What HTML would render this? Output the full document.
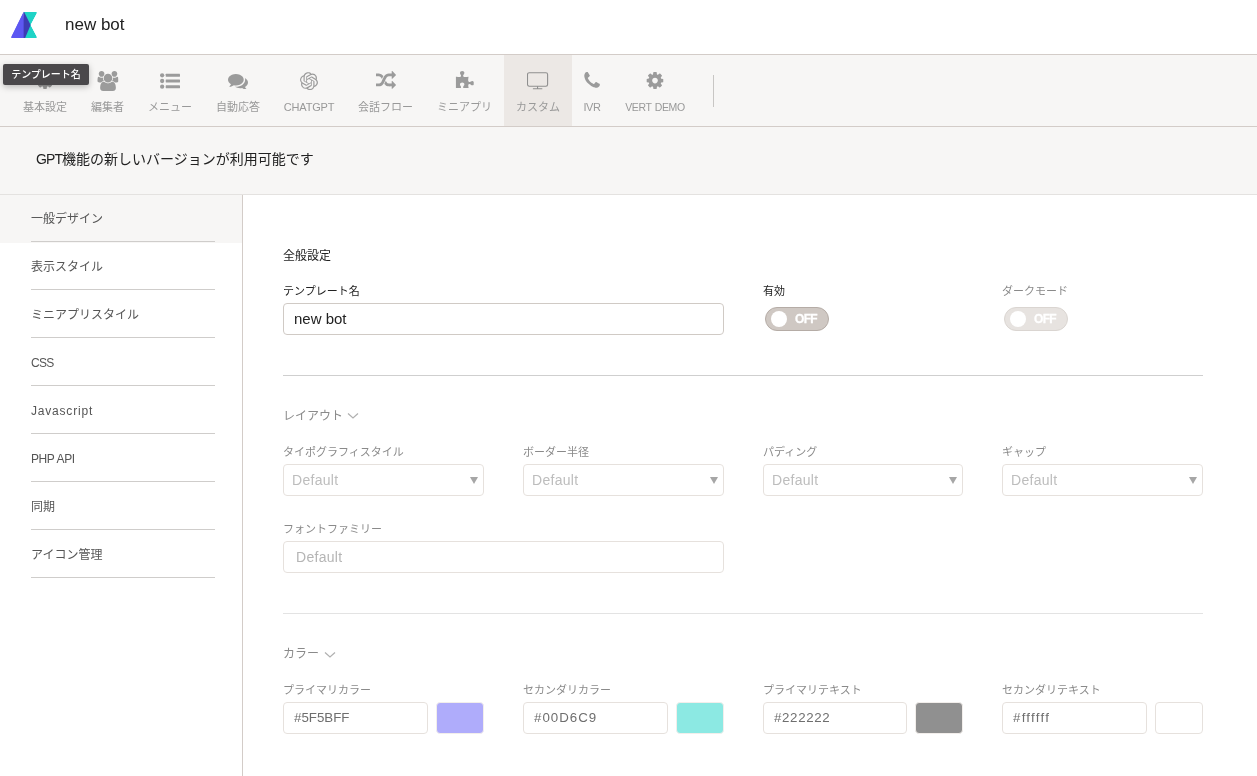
<!DOCTYPE html>
<html lang="ja">
<head>
<meta charset="utf-8">
<title>new bot</title>
<style>
*{box-sizing:border-box;margin:0;padding:0}
html,body{width:1257px;height:776px;overflow:hidden;background:#fff}
body{font-family:"Liberation Sans","Noto Sans CJK JP",sans-serif;color:#222;position:relative}
.abs{position:absolute}
#hdr,#nav,#tip,#notice,#side,#main{will-change:transform}
/* header */
#hdr{position:absolute;left:0;top:0;width:1257px;height:55px;background:#fff;border-bottom:1px solid #d3ccc8}
#logo{position:absolute;left:10px;top:11px;width:28px;height:28px}
#title{position:absolute;left:65px;top:13px;height:24px;line-height:24px;font-size:17px;color:#222;white-space:nowrap}
/* nav */
#nav{position:absolute;left:0;top:55px;width:1257px;height:72px;background:#f7f6f5;border-bottom:1px solid #d3ccc8}
.ni{position:absolute;top:0;height:71px;text-align:center;color:#999;font-size:11px;white-space:nowrap}
.ni svg{position:absolute;left:50%;transform:translateX(-50%)}
.ni span{position:absolute;left:0;right:0;top:44px;line-height:16px}
.ni.act{background:#ece8e5}
#vdiv{position:absolute;left:713px;top:20px;width:1px;height:32px;background:#c8c6c4}
#tip{position:absolute;left:3px;top:64px;width:86px;height:21px;background:#4a484b;border-radius:2px;color:#fff;font-size:10px;font-weight:500;line-height:21px;text-align:center;box-shadow:0 2px 6px rgba(0,0,0,.25);white-space:nowrap}
/* notice */
#notice{position:absolute;left:0;top:127px;width:1257px;height:68px;background:#f7f6f5;border-bottom:1px solid #e4e2e0}
#notice>span{position:absolute;left:36px;top:20px;line-height:24px;font-size:14px;color:#222;white-space:nowrap}
/* sidebar */
#side{position:absolute;left:0;top:195px;width:243px;height:581px;border-right:1px solid #d3ccc8;background:#fff}
.si{position:absolute;left:0;width:242px;height:48px;font-size:12px;color:#555;line-height:48px;padding-left:31px;white-space:nowrap}
.si.act{background:#f7f6f5;color:#555}
.si i{position:absolute;left:31px;bottom:1px;width:184px;height:1px;background:#cfcdcb}
/* main */
.lbl{position:absolute;font-size:11px;line-height:16px;color:#222;white-space:nowrap}
.lbl.g{color:#8a8a8a}
.sec{position:absolute;font-size:12px;line-height:18px;color:#222;white-space:nowrap}
.sec.g{color:#8a8a8a}
.inp{position:absolute;height:32px;border:1px solid #d0cac5;border-radius:4px;background:#fff;font-size:15px;line-height:30px;padding-left:10px;color:#222;white-space:nowrap}
.inp.l{border-color:#e6e1dd;color:#b5b5b5;font-size:14px;letter-spacing:.3px}
.inp.c{color:#6e6e6e;border-color:#e6e1dd;font-size:13.3px;padding-left:10px}
.sel{position:absolute;height:32px;width:201px;border:1px solid #e6e1dd;border-radius:4px;background:#fff;font-size:14px;letter-spacing:.3px;line-height:30px;padding-left:8px;color:#bdbdbd;white-space:nowrap}
.sel b{position:absolute;right:5.5px;top:12px;width:0;height:0;border-left:4.5px solid transparent;border-right:4.5px solid transparent;border-top:7.5px solid #a6a6a6}
.sw{position:absolute;width:48px;height:32px;border-radius:4px;border:1px solid #f2eeeb}
.hr{position:absolute;left:283px;width:920px;height:1px}
.tg{position:absolute;width:64px;height:24px;border-radius:12px;top:307px}
.tg u{position:absolute;left:5px;top:3px;width:16px;height:16px;border-radius:8px;background:#fff}
.tg s{position:absolute;left:29px;top:0;line-height:22px;font-size:12px;letter-spacing:-.7px;font-weight:bold;color:#fff;text-decoration:none;-webkit-text-stroke:.3px #fff}
</style>
</head>
<body>
<div id="hdr">
<svg id="logo" viewBox="0 0 28 28"><defs><clipPath id="lc"><path d="M12.86 1.90Q13.30 1.00 14.30 1.00L25.80 1.00Q27.40 1.00 26.67 2.42L20.60 14.00L26.67 25.58Q27.40 27.00 25.80 27.00L2.20 27.00Q0.40 27.00 1.19 25.38Z"/></clipPath></defs><g clip-path="url(#lc)"><path d="M13.7 0 L0 28 L14.6 28 Z" fill="#5d57f2"/><path d="M13.7 0 H28 L20.6 14 L28 28 H14.6 L14.6 14 Z" fill="#1fd3c6"/><path d="M13.6 0 L20.6 14 L14.7 28 H13.6 Z" fill="#3d3bb4"/></g></svg>
<div id="title">new bot</div>
</div>
<div id="nav">
<div class="ni" style="left:11px;width:68px"><svg style="top:17.23px" width="17.14" height="17.14" viewBox="128 128 1536 1536"><path fill="#9b9b9b" d="M1152 896q0-106-75-181t-181-75-181 75-75 181 75 181 181 75 181-75 75-181zm512-109v222q0 12-8 23t-20 13l-185 28q-19 54-39 91 35 50 107 138 10 12 10 25t-9 23q-27 37-99 108t-94 71q-12 0-26-9l-138-108q-44 23-91 38-16 136-29 186-7 28-36 28h-222q-14 0-24.500-8.500t-11.500-21.500l-28-184q-49-16-90-37l-141 107q-10 9-25 9-14 0-25-11-126-114-165-168-7-10-7-23 0-12 8-23 15-21 51-66.500t54-70.500q-27-50-41-99l-183-27q-13-2-21-12.500t-8-23.500v-222q0-12 8-23t19-13l186-28q14-46 39-92-40-57-107-138-10-12-10-24 0-10 9-23 26-36 98.500-107.500t94.500-71.500q13 0 26 10l138 107q44-23 91-38 16-136 29-186 7-28 36-28h222q14 0 24.500 8.500t11.500 21.500l28 184q49 16 90 37l142-107q9-9 24-9 13 0 25 10 129 119 165 170 7 8 7 22 0 12-8 23-15 21-51 66.500t-54 70.500q26 50 41 98l183 28q13 2 21 12.500t8 23.500z"/></svg><span>基本設定</span></div>
<div class="ni" style="left:79px;width:57px"><svg style="top:15.80px" width="21.43" height="20.00" viewBox="0 0 1920 1792"><path fill="#9b9b9b" d="M593 896q-162 5-265 128h-134q-82 0-138-40.500t-56-118.500q0-353 124-353 6 0 43.500 21t97.500 42.500 119 21.500q67 0 133-23-5 37-5 66 0 139 81 256zm1071 637q0 120-73 189.500t-194 69.500h-874q-121 0-194-69.500t-73-189.500q0-53 3.500-103.500t14-109 26.500-108.500 43-97.500 62-81 85.500-53.500 111.500-20q10 0 43 21.500t73 48 107 48 135 21.500 135-21.500 107-48 73-48 43-21.500q61 0 111.500 20t85.500 53.500 62 81 43 97.500 26.500 108.500 14 109 3.500 103.500zm-1024-1277q0 106-75 181t-181 75-181-75-75-181 75-181 181-75 181 75 75 181zm704 384q0 159-112.500 271.500t-271.500 112.500-271.500-112.500-112.500-271.500 112.500-271.500 271.500-112.500 271.500 112.500 112.500 271.500zm576 225q0 78-56 118.500t-138 40.500h-134q-103-123-265-128 81-117 81-256 0-29-5-66 66 23 133 23 59 0 119-21.500t97.500-42.500 43.500-21q124 0 124 353zm-128-609q0 106-75 181t-181 75-181-75-75-181 75-181 181-75 181 75 75 181z"/></svg><span>編集者</span></div>
<div class="ni" style="left:136px;width:68px"><svg style="top:15.8px" width="20" height="20" viewBox="0 0 1792 1792" fill="#9b9b9b"><circle cx="192" cy="384" r="192"/><circle cx="192" cy="896" r="192"/><circle cx="192" cy="1408" r="192"/><rect x="512" y="256" width="1280" height="256" rx="32"/><rect x="512" y="768" width="1280" height="256" rx="32"/><rect x="512" y="1280" width="1280" height="256" rx="32"/></svg><span>メニュー</span></div>
<div class="ni" style="left:204px;width:68px"><svg style="top:18.66px" width="20.00" height="15.72" viewBox="0 256 1792 1408"><path fill="#9b9b9b" d="M1408 768q0 139-94 257t-256.500 186.500-353.500 68.500q-86 0-176-16-124 88-278 128-36 9-86 16h-3q-11 0-20.500-8t-11.500-21q-1-3-1-6.500t.500-6.500 2-6l2.500-5 3.500-5.500 4-5 4.500-5 4-4.500q5-6 23-25t26-29.500 22.500-29 25-38.500 20.500-44q-124-72-195-177t-71-224q0-139 94-257t256.500-186.500 353.500-68.500 353.500 68.500 256.500 186.500 94 257zm384 256q0 120-71 224.500t-195 176.500q10 24 20.500 44t25 38.500 22.500 29 26 29.500 23 25q1 1 4 4.500t4.500 5 4 5 3.500 5.500l2.500 5 2 6 .500 6.500-1 6.500q-3 14-13 22t-22 7q-50-7-86-16-154-40-278-128-90 16-176 16-271 0-472-132 58 4 88 4 161 0 309-45t264-129q125-92 192-212t67-254q0-77-23-152 129 71 204 178t75 230z"/></svg><span>自動応答</span></div>
<div class="ni" style="left:272px;width:74px"><svg style="top:16.6px" width="18" height="18.3" viewBox="0 0 24 24"><path fill="#9b9b9b" d="M22.2819 9.8211a5.9847 5.9847 0 0 0-.5157-4.9108 6.0462 6.0462 0 0 0-6.5098-2.9A6.0651 6.0651 0 0 0 4.9807 4.1818a5.9847 5.9847 0 0 0-3.9977 2.9 6.0462 6.0462 0 0 0 .7427 7.0966 5.98 5.98 0 0 0 .511 4.9107 6.051 6.051 0 0 0 6.5146 2.9001A5.9847 5.9847 0 0 0 13.2599 24a6.0557 6.0557 0 0 0 5.7718-4.2058 5.9894 5.9894 0 0 0 3.9977-2.9001 6.0557 6.0557 0 0 0-.7475-7.0729zm-9.022 12.6081a4.4755 4.4755 0 0 1-2.8764-1.0408l.1419-.0804 4.7783-2.7582a.7948.7948 0 0 0 .3927-.6813v-6.7369l2.02 1.1686a.071.071 0 0 1 .038.052v5.5826a4.504 4.504 0 0 1-4.4945 4.4944zm-9.6607-4.1254a4.4708 4.4708 0 0 1-.5346-3.0137l.142.0852 4.783 2.7582a.7712.7712 0 0 0 .7806 0l5.8428-3.3685v2.3324a.0804.0804 0 0 1-.0332.0615L9.74 19.9502a4.4992 4.4992 0 0 1-6.1408-1.6464zM2.3408 7.8956a4.485 4.485 0 0 1 2.3655-1.9728V11.6a.7664.7664 0 0 0 .3879.6765l5.8144 3.3543-2.0201 1.1685a.0757.0757 0 0 1-.071 0l-4.8303-2.7865A4.504 4.504 0 0 1 2.3408 7.872zm16.5963 3.8558L13.1038 8.364 15.1192 7.2a.0757.0757 0 0 1 .071 0l4.8303 2.7913a4.4944 4.4944 0 0 1-.6765 8.1042v-5.6772a.79.79 0 0 0-.407-.667zm2.0107-3.0231l-.142-.0852-4.7735-2.7818a.7759.7759 0 0 0-.7854 0L9.409 9.2297V6.8974a.0662.0662 0 0 1 .0284-.0615l4.8303-2.7866a4.4992 4.4992 0 0 1 6.6802 4.66zM8.3065 12.863l-2.02-1.1638a.0804.0804 0 0 1-.038-.0567V6.0742a4.4992 4.4992 0 0 1 7.3757-3.4537l-.142.0805L8.704 5.459a.7948.7948 0 0 0-.3927.6813zm1.0976-2.3654l2.602-1.4998 2.6069 1.4998v2.9994l-2.5974 1.4997-2.6067-1.4997Z"/></svg><span style="letter-spacing:-.2px">CHATGPT</span></div>
<div class="ni" style="left:346px;width:79px"><svg style="top:16.16px" width="20.00" height="17.86" viewBox="0 32 1792 1600"><path fill="#9b9b9b" d="M666 481q-60 92-137 273-22-45-37-72.500t-40.500-63.500-51-56.500-63-35-81.500-14.500h-224q-14 0-23-9t-9-23v-192q0-14 9-23t23-9h224q250 0 410 225zm1126 799q0 14-9 23l-320 320q-9 9-23 9-13 0-22.500-9.500t-9.500-22.500v-192q-32 0-85 .500t-81 1-73-1-71-5-64-10.500-63-18.500-58-28.500-59-40-55-53.500-56-69.500q59-93 136-273 22 45 37 72.500t40.500 63.500 51 56.500 63 35 81.500 14.500h256v-192q0-14 9-23t23-9q12 0 24 10l319 319q9 9 9 23zm0-896q0 14-9 23l-320 320q-9 9-23 9-13 0-22.500-9.500t-9.500-22.500v-192h-256q-48 0-87 15t-69 45-51 61.500-45 77.500q-32 62-78 171-29 66-49.500 111t-54 105-64 100-74 83-90 68.500-106.500 42-128 16.500h-224q-14 0-23-9t-9-23v-192q0-14 9-23t23-9h224q48 0 87-15t69-45 51-61.500 45-77.500q32-62 78-171 29-66 49.500-111t54-105 64-100 74-83 90-68.500 106.500-42 128-16.500h256v-192q0-14 9-23t23-9q12 0 24 10l319 319q9 9 9 23z"/></svg><span>会話フロー</span></div>
<div class="ni" style="left:425px;width:79px"><svg style="top:15.80px" width="18.57" height="17.54" viewBox="0 0 1664 1572"><path fill="#9b9b9b" d="M1664 1098q0 81-44.500 135t-123.500 54q-41 0-77.500-17.500t-59-38-56.500-38-71-17.500q-110 0-110 124 0 39 16 115t15 115v5q-22 0-33 1-34 3-97.500 11.500t-115.500 13.500-98 5q-61 0-103-26.500t-42-83.500q0-37 17.500-71t38-56.500 38-59 17.500-77.500q0-79-54-123.500t-135-44.500q-84 0-143 45.500t-59 127.500q0 43 15 83t33.500 64.500 33.500 53 15 50.500q0 45-46 89-37 35-117 35-95 0-245-24-9-2-27.500-4t-27.500-4l-13-2q-1 0-3-1-2 0-2-1v-1024q2 1 17.500 3.500t34 5 21.500 3.500q150 24 245 24 80 0 117-35 46-44 46-89 0-22-15-50.500t-33.500-53-33.500-64.500-15-83q0-82 59-127.500t144-45.500q80 0 134 44.500t54 123.500q0 41-17.500 77.500t-38 59-38 56.500-17.500 71q0 57 42 83.500t103 26.500q64 0 180-15t163-17v2q-1 2-3.500 17.500t-5 34-3.500 21.500q-24 150-24 245 0 80 35 117 44 46 89 46 22 0 50.500-15t53-33.500 64.500-33.500 83-15q82 0 127.500 59t45.500 143z"/></svg><span>ミニアプリ</span></div>
<div class="ni act" style="left:504px;width:68px"><svg style="top:17px" width="22" height="18" viewBox="0 0 22 18" fill="none" stroke="#8f8f8f" stroke-width="1.1"><rect x="0.5" y="0.7" width="20.1" height="13.5" rx="1.7"/><path d="M10.55 14.2V16.7M5.9 16.7H15.3"/></svg><span>カスタム</span></div>
<div class="ni" style="left:572px;width:40px"><svg style="top:17.23px" width="15.71" height="15.71" viewBox="192 128 1408 1408"><path fill="#9b9b9b" d="M1600 1240q0 27-10 70.500t-21 68.500q-21 50-122 106-94 51-186 51-27 0-53-3.500t-57.500-12.500-47-14.500-55.500-20.500-49-18q-98-35-175-83-127-79-264-216t-216-264q-48-77-83-175-3-9-18-49t-20.500-55.500-14.500-47-12.500-57.500-3.500-53q0-92 51-186 56-101 106-122 25-11 68.500-21t70.500-10q14 0 21 3 18 6 53 76 11 19 30 54t35 63.500 31 53.500q3 4 17.500 25t21.500 35.500 7 28.500q0 20-28.500 50t-62 55-62 53-28.500 46q0 9 5 22.500t8.500 20.500 14 24 11.500 19q76 137 174 235t235 174q2 1 19 11.500t24 14 20.500 8.500 22.500 5q18 0 46-28.500t53-62 55-62 50-28.500q14 0 28.500 7t35.500 21.500 25 17.500q25 15 53.500 31t63.500 35 54 30q70 35 76 53 3 7 3 21z"/></svg><span style="letter-spacing:-.4px">IVR</span></div>
<div class="ni" style="left:612px;width:86px"><svg style="top:17.23px" width="17.14" height="17.14" viewBox="128 128 1536 1536"><path fill="#9b9b9b" d="M1152 896q0-106-75-181t-181-75-181 75-75 181 75 181 181 75 181-75 75-181zm512-109v222q0 12-8 23t-20 13l-185 28q-19 54-39 91 35 50 107 138 10 12 10 25t-9 23q-27 37-99 108t-94 71q-12 0-26-9l-138-108q-44 23-91 38-16 136-29 186-7 28-36 28h-222q-14 0-24.500-8.500t-11.500-21.500l-28-184q-49-16-90-37l-141 107q-10 9-25 9-14 0-25-11-126-114-165-168-7-10-7-23 0-12 8-23 15-21 51-66.500t54-70.500q-27-50-41-99l-183-27q-13-2-21-12.500t-8-23.500v-222q0-12 8-23t19-13l186-28q14-46 39-92-40-57-107-138-10-12-10-24 0-10 9-23 26-36 98.500-107.500t94.500-71.500q13 0 26 10l138 107q44-23 91-38 16-136 29-186 7-28 36-28h222q14 0 24.500 8.500t11.500 21.500l28 184q49 16 90 37l142-107q9-9 24-9 13 0 25 10 129 119 165 170 7 8 7 22 0 12-8 23-15 21-51 66.500t-54 70.500q26 50 41 98l183 28q13 2 21 12.500t8 23.500z"/></svg><span style="font-size:10.5px;letter-spacing:-.4px;word-spacing:1px">VERT DEMO</span></div>
<div id="vdiv"></div>
</div>
<div id="tip">テンプレート名</div>
<div id="notice"><span><b style="font-weight:normal;letter-spacing:-.9px">GPT</b>機能の新しいバージョンが利用可能です</span></div>
<div id="side">
<div class="si act" style="top:0">一般デザイン<i></i></div>
<div class="si" style="top:48px">表示スタイル<i></i></div>
<div class="si" style="top:96px">ミニアプリスタイル<i></i></div>
<div class="si" style="top:144px;letter-spacing:-.7px">CSS<i></i></div>
<div class="si" style="top:192px;letter-spacing:.8px">Javascript<i></i></div>
<div class="si" style="top:240px;letter-spacing:-.4px">PHP API<i></i></div>
<div class="si" style="top:288px">同期<i></i></div>
<div class="si" style="top:336px">アイコン管理<i></i></div>
</div>
<div id="main">
<div class="sec" style="left:283px;top:247px">全般設定</div>
<div class="lbl" style="left:283px;top:283px">テンプレート名</div>
<div class="inp" style="left:283px;top:303px;width:441px">new bot</div>
<div class="lbl" style="left:763px;top:283px">有効</div>
<div class="tg" style="left:765px;background:#cfc8c3;border:1px solid #b5aca6"><u></u><s>OFF</s></div>
<div class="lbl g" style="left:1002px;top:283px">ダークモード</div>
<div class="tg" style="left:1004px;background:#e7e3e0;border:1px solid #dad5d1"><u></u><s>OFF</s></div>
<div class="hr" style="top:375px;background:#cfcfcf"></div>
<div class="sec g" style="left:283px;top:407px">レイアウト</div>
<svg class="abs" style="left:347px;top:412px" width="12" height="8" viewBox="0 0 12 8"><path d="M1 1.5 L6 6 L11 1.5" fill="none" stroke="#b0b0b0" stroke-width="1.2"/></svg>
<div class="lbl g" style="left:283px;top:444px">タイポグラフィスタイル</div>
<div class="lbl g" style="left:523px;top:444px">ボーダー半径</div>
<div class="lbl g" style="left:763px;top:444px">パディング</div>
<div class="lbl g" style="left:1002px;top:444px">ギャップ</div>
<div class="sel" style="left:283px;top:464px">Default<b></b></div>
<div class="sel" style="left:523px;top:464px">Default<b></b></div>
<div class="sel" style="left:763px;top:464px;width:200px">Default<b></b></div>
<div class="sel" style="left:1002px;top:464px">Default<b></b></div>
<div class="lbl g" style="left:283px;top:521px">フォントファミリー</div>
<div class="inp l" style="left:283px;top:541px;width:441px;padding-left:12px">Default</div>
<div class="hr" style="top:613px;background:#e3e3e3"></div>
<div class="sec g" style="left:283px;top:645px">カラー</div>
<svg class="abs" style="left:323.5px;top:650.5px" width="12" height="8" viewBox="0 0 12 8"><path d="M1 1.5 L6 6 L11 1.5" fill="none" stroke="#b0b0b0" stroke-width="1.2"/></svg>
<div class="lbl g" style="left:283px;top:682px">プライマリカラー</div>
<div class="lbl g" style="left:523px;top:682px">セカンダリカラー</div>
<div class="lbl g" style="left:763px;top:682px">プライマリテキスト</div>
<div class="lbl g" style="left:1002px;top:682px">セカンダリテキスト</div>
<div class="inp c" style="left:283px;top:702px;width:145px">#5F5BFF</div>
<div class="sw" style="left:436px;top:702px;background:#afacfb"></div>
<div class="inp c" style="left:523px;top:702px;width:145px;letter-spacing:1px">#00D6C9</div>
<div class="sw" style="left:676px;top:702px;background:#8ce9e3"></div>
<div class="inp c" style="left:763px;top:702px;width:144px;letter-spacing:.65px">#222222</div>
<div class="sw" style="left:915px;top:702px;background:#909090"></div>
<div class="inp c" style="left:1002px;top:702px;width:145px;letter-spacing:1.25px">#ffffff</div>
<div class="sw" style="left:1155px;top:702px;background:#fff;border-color:#e6e1dd"></div>
</div>
</body>
</html>
